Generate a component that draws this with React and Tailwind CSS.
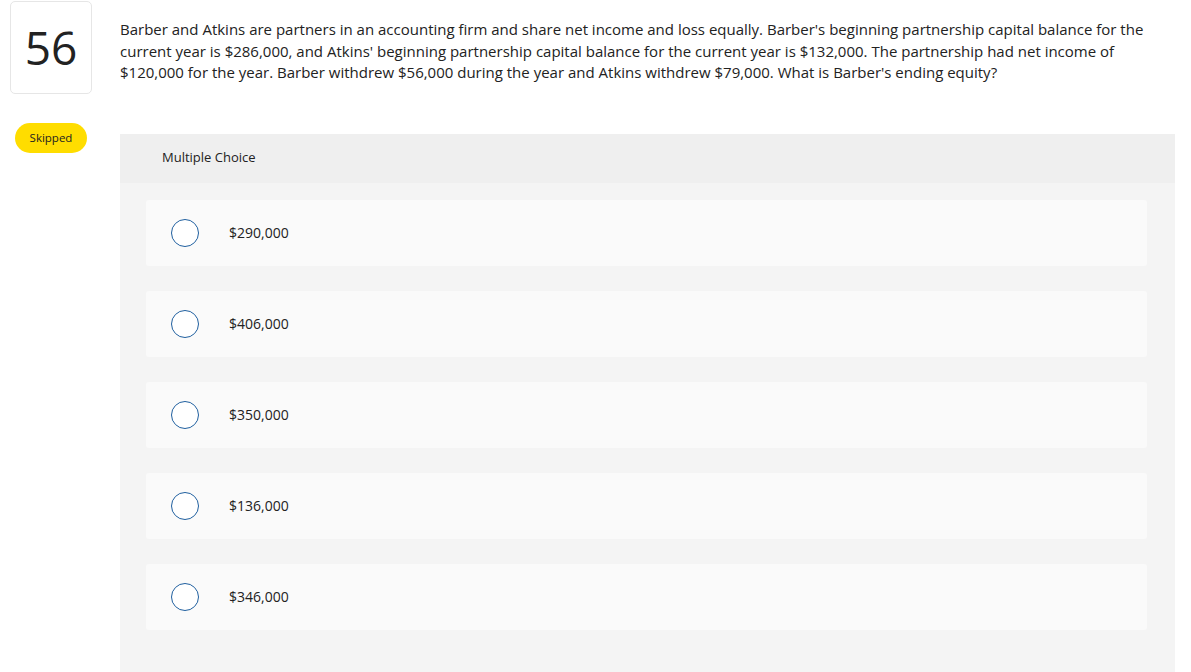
const options = ["$290,000", "$406,000", "$350,000", "$136,000", "$346,000"];

function Option({ label }) {
  return (
    <div className="flex h-[66px] items-center rounded-[3px] bg-[#fafafa] pl-[25px]">
      <span className="h-[28px] w-[28px] rounded-full border-[1.5px] border-[#1f5f9f] bg-white" />
      <span className="ml-[30px] text-[14px] text-[#222]">{label}</span>
    </div>
  );
}

export default function App() {
  return (
    <div
      className="flex min-h-[672px] bg-white text-[#222]"
      style={{ fontFamily: "'Open Sans', Lato, sans-serif" }}
    >
      <div className="flex w-[120px] shrink-0 flex-col pl-[10px] pt-[1px]">
        <div className="flex h-[93px] w-[82px] items-center justify-center rounded-[5px] border border-[#e6e6e6] text-[46px] text-[#222]">
          56
        </div>
        <div className="ml-[5px] mt-[29px] flex h-[30px] w-[72px] items-center justify-center rounded-full bg-[#ffdd00] text-[11.5px] text-[#222]">
          Skipped
        </div>
      </div>

      <div className="flex flex-1 flex-col pr-[16px]">
        <p className="mt-[19px] w-[1030px] text-[15px] leading-[21.5px] text-[#222]">
          Barber and Atkins are partners in an accounting firm and share net income and loss equally. Barber's beginning partnership capital balance for the current year is $286,000, and Atkins' beginning partnership capital balance for the current year is $132,000. The partnership had net income of $120,000 for the year. Barber withdrew $56,000 during the year and Atkins withdrew $79,000. What is Barber's ending equity?
        </p>

        <div className="mt-[50px] flex flex-1 flex-col bg-[#f4f4f4]">
          <div className="flex h-[49px] items-center bg-[#efefef] pl-[42px] text-[13px] text-[#222]">
            Multiple Choice
          </div>
          <div className="flex flex-col gap-[25px] px-[26px] pb-[42px] pt-[17px] pr-[28px]">
            {options.map((o) => (
              <Option key={o} label={o} />
            ))}
          </div>
        </div>
      </div>
    </div>
  );
}
